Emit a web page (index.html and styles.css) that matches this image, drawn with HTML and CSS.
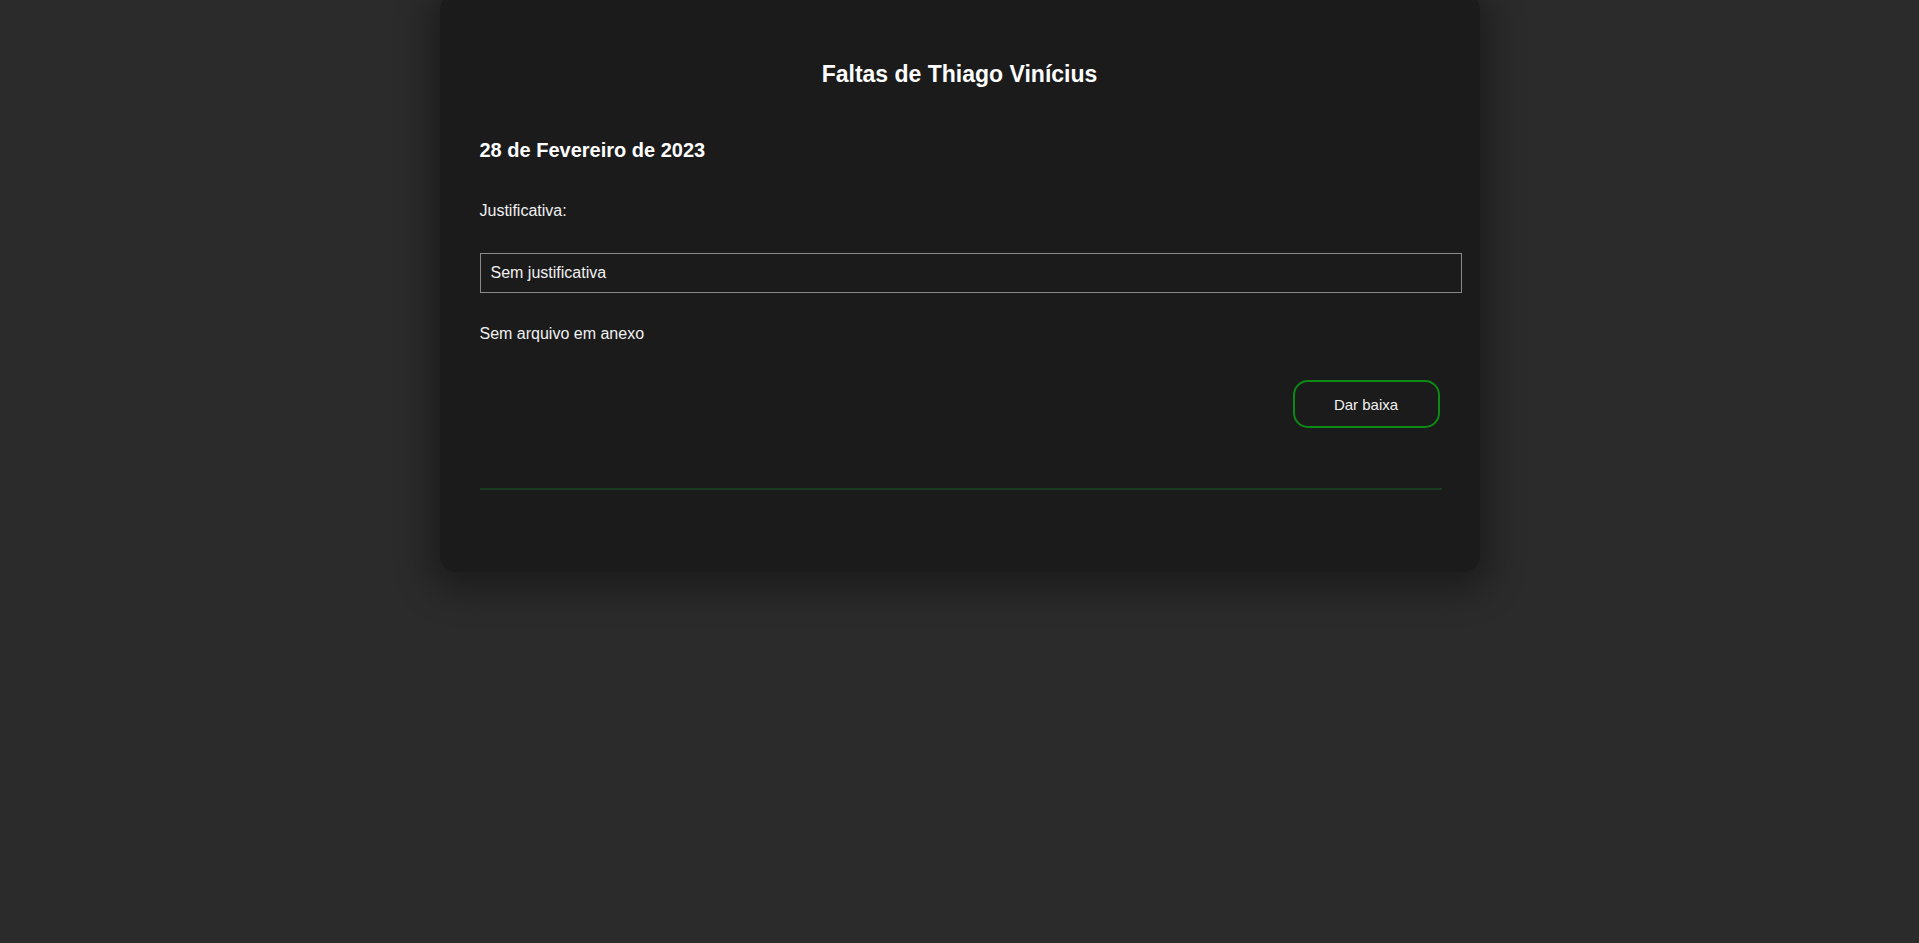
FILE: index.html
```html
<!DOCTYPE html>
<html lang="pt-BR">
<head>
<meta charset="utf-8">
<title>Faltas</title>
<link rel="stylesheet" href="styles.css">
</head>
<body>
<main class="card">
  <h1 class="title">Faltas de Thiago Vinícius</h1>
  <section class="falta">
    <h2 class="date">28 de Fevereiro de 2023</h2>
    <p class="label">Justificativa:</p>
    <input class="field" type="text" value="Sem justificativa" readonly>
    <p class="attach">Sem arquivo em anexo</p>
    <div class="actions">
      <button class="btn" type="button">Dar baixa</button>
    </div>
    <hr class="sep">
  </section>
</main>
</body>
</html>
```
FILE: styles.css
```css
html, body {
  margin: 0;
  padding: 0;
}
body {
  background: #2b2b2b;
  min-height: 100vh;
  font-family: "Liberation Sans", Arial, sans-serif;
  color: #ffffff;
}
.card {
  width: 1040px;
  box-sizing: border-box;
  margin: -6px auto 0;
  padding: 40px 40px 40px;
  background: #1b1b1b;
  border-radius: 16px;
  box-shadow: 0 8px 34px 10px rgba(0, 0, 0, 0.35);
}
.title {
  margin: 27px 0 0;
  font-size: 23px;
  line-height: 27px;
  font-weight: bold;
  text-align: center;
  color: #ffffff;
}
.date {
  margin: 50px 0 0;
  font-size: 20px;
  line-height: 24px;
  font-weight: bold;
  color: #ffffff;
}
.label {
  margin: 40px 0 0;
  font-size: 16px;
  line-height: 18px;
  color: #f0f0f0;
}
.field {
  display: block;
  width: 100%;
  margin: 33px 0 0;
  padding: 10px;
  border: 1px solid #8a8a8a;
  border-radius: 0;
  background: #1b1b1b;
  color: #f0f0f0;
  font-family: "Liberation Sans", Arial, sans-serif;
  font-size: 16px;
  line-height: 18px;
  box-sizing: content-box;
  height: 18px;
  outline: none;
}
.attach {
  margin: 32px 0 0;
  font-size: 16px;
  line-height: 18px;
  color: #f0f0f0;
}
.actions {
  display: flex;
  justify-content: flex-end;
  margin-top: 37px;
}
.btn {
  width: 147px;
  height: 48px;
  box-sizing: border-box;
  border: 2px solid #0c8a16;
  border-radius: 15px;
  background: transparent;
  color: #f0f0f0;
  font-family: "Liberation Sans", Arial, sans-serif;
  font-size: 15px;
  line-height: 17px;
  padding: 0;
  cursor: pointer;
}
.sep {
  width: 100%;
  height: 0;
  margin: 60px 0 42px;
  border: 1px solid #1b3b20;
}
```
